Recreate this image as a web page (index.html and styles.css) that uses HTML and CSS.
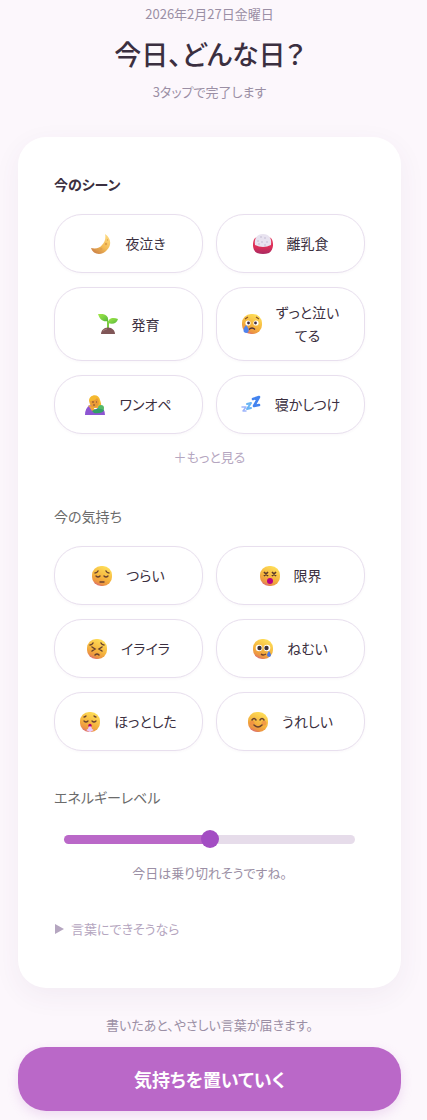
FILE: index.html
```
<!DOCTYPE html>
<html lang="ja">
<head>
    <meta charset="UTF-8">
    <meta name="viewport" content="width=device-width, initial-scale=1.0">
    <title>今日、どんな日？</title>
    <link rel="stylesheet" href="styles.css">
</head>
<body>

    <!-- 顔アイコン共通のグラデーション -->
    <svg class="defs" width="0" height="0" aria-hidden="true">
        <defs>
            <linearGradient id="face" x1="0.75" y1="0" x2="0.3" y2="1">
                <stop offset="0" stop-color="#ffe15a"/>
                <stop offset="0.6" stop-color="#f4b13d"/>
                <stop offset="0.85" stop-color="#ec9443"/>
                <stop offset="1" stop-color="#d96a78"/>
            </linearGradient>
            <linearGradient id="moon" x1="1" y1="0" x2="0.3" y2="1">
                <stop offset="0" stop-color="#ffe08a"/>
                <stop offset="0.6" stop-color="#f3bb55"/>
                <stop offset="1" stop-color="#cf8648"/>
            </linearGradient>
            <linearGradient id="bowl" x1="0" y1="0" x2="0" y2="1">
                <stop offset="0" stop-color="#e8355a"/>
                <stop offset="0.6" stop-color="#dc2f58"/>
                <stop offset="1" stop-color="#a92a62"/>
            </linearGradient>
            <linearGradient id="leaf" x1="0" y1="0" x2="1" y2="1">
                <stop offset="0" stop-color="#a5ea48"/>
                <stop offset="1" stop-color="#55b83c"/>
            </linearGradient>
        </defs>
    </svg>

    <main class="container">
        <header class="header">
            <p class="date">2026年2月27日金曜日</p>
            <h1>今日、どんな日？</h1>
            <p class="lead">3タップで完了します</p>
        </header>

        <form id="moodForm">
            <div class="card">
                <!-- シーン -->
                <section class="scene">
                    <h2 class="label label-strong">今のシーン</h2>
                    <div class="chips">
                        <button type="button" class="chip">
                            <svg class="icon" viewBox="0 0 20 20" aria-hidden="true">
                                <path d="M14 0c6 4 7 11 2 16-5 6-14 5-16-2 5 1 9 0 11-3 3-3 4-7 3-11z" fill="url(#moon)"/>
                                <g fill="#e0a04a"><circle cx="15" cy="10" r="1.2"/><circle cx="10" cy="15" r="1.3"/><circle cx="6" cy="16" r=".7"/><circle cx="16.500" cy="6" r=".7"/></g>
                            </svg>
                            <span>夜泣き</span>
                        </button>
                        <button type="button" class="chip">
                            <svg class="icon" viewBox="0 0 20 20" aria-hidden="true">
                                <path d="M2 4q8-4 16 0c3 4 3 12-2 15q-6 2-12 0C-1 16-1 8 2 4z" fill="url(#bowl)"/>
                                <path d="M2 11C1 4 4 0 10 0s9 4 8 11q-8 4-16 0z" fill="#e8e3f0"/>
                                <g fill="#b8afc9"><circle cx="8" cy="3" r=".7"/><circle cx="12" cy="4" r=".7"/><circle cx="5" cy="7" r=".7"/><circle cx="9" cy="8" r=".7"/><circle cx="14" cy="8" r=".7"/><circle cx="6" cy="10" r=".7"/><circle cx="12" cy="11" r=".7"/></g>
                            </svg>
                            <span>離乳食</span>
                        </button>
                        <button type="button" class="chip">
                            <svg class="icon" viewBox="0 0 20 20" aria-hidden="true">
                                <path d="M10 15V7" stroke="#7ccb42" stroke-width="2"/>
                                <path d="M0 0c7-1 11 2 10 7C5 8 2 6 0 0z" fill="url(#leaf)"/>
                                <path d="M10 9c0-5 5-6 10-4-1 4-5 6-10 4z" fill="url(#leaf)"/>
                                <path d="M3 20q0-4 4-6 3-1 6 0 4 2 4 6z" fill="#805657"/>
                                <path d="M5 17q2-2 4-2" stroke="#a47a76" fill="none"/>
                            </svg>
                            <span>発育</span>
                        </button>
                        <button type="button" class="chip">
                            <svg class="icon" viewBox="0 0 20 20" aria-hidden="true">
                                <rect width="20" height="20" rx="9" fill="url(#face)"/>
                                <path d="M3 5l3-2M17 5l-3-2" stroke="#875127" stroke-width="1.200"/>
                                <circle cx="6" cy="9" r="2.600" fill="#fff"/><circle cx="14" cy="9" r="2.600" fill="#fff"/>
                                <circle cx="6.500" cy="9" r="1.400" fill="#412c3e"/><circle cx="13.500" cy="9" r="1.400" fill="#412c3e"/>
                                <path d="M7 15.500q3-3 6 0" stroke="#4a2c39" stroke-width="1.300" fill="none"/>
                                <path d="M4 11q5 6 1 8-5 0-3-5z" fill="#4f83ee"/>
                            </svg>
                            <span>ずっと泣い<br>てる</span>
                        </button>
                        <button type="button" class="chip">
                            <svg class="icon" viewBox="0 0 20 20" aria-hidden="true">
                                <path d="M4 6c0-7 10-8 11-1 1 3 2 5 0 8H6z" fill="#f5b92f"/>
                                <path d="M5 6q5 0 7-3 3 3 1 8-4 3-7 0z" fill="#e99a37"/>
                                <path d="M7 7h2m2 0h1M8 10h2" stroke="#7c4930"/>
                                <path d="M0 20q0-7 5-10l5 5 5-4q5 3 5 9z" fill="#8d55d2"/>
                                <path d="M3 10l5 2 2 3-3 1z" fill="#f1a63c"/>
                                <circle cx="16" cy="13" r="3" fill="#55b968"/>
                                <path d="M7 16q5-4 12-1-2 4-10 3z" fill="#32a068"/>
                            </svg>
                            <span>ワンオペ</span>
                        </button>
                        <button type="button" class="chip">
                            <svg class="icon" viewBox="0 0 20 20" aria-hidden="true" fill="none" stroke-linejoin="round" stroke-linecap="round">
                                <path d="M12 4l6-2-5 9 5-1" stroke="#4383ef" stroke-width="2.600"/>
                                <path d="M6 9l4-1-4 6 4-1" stroke="#68b4f4" stroke-width="2"/>
                                <path d="M1 12l4 0-3 4 3 0" stroke="#9db5fb" stroke-width="1.500"/>
                            </svg>
                            <span>寝かしつけ</span>
                        </button>
                    </div>
                    <button type="button" class="more">＋もっと見る</button>
                </section>

                <!-- 気持ち -->
                <section class="feeling">
                    <h2 class="label">今の気持ち</h2>
                    <div class="chips">
                        <button type="button" class="chip">
                            <svg class="icon" viewBox="0 0 20 20" aria-hidden="true" fill="none" stroke="#69412f" stroke-width="1.400" stroke-linecap="round">
                                <rect width="20" height="20" rx="9" fill="url(#face)" stroke="none"/>
                                <path d="M3 7q2 0 3-2M17 7q-2 0-3-2M4 10q2 2 4 0M12 10q2 2 4 0M8 16h4"/>
                            </svg>
                            <span>つらい</span>
                        </button>
                        <button type="button" class="chip">
                            <svg class="icon" viewBox="0 0 20 20" aria-hidden="true">
                                <rect width="20" height="20" rx="9" fill="url(#face)"/>
                                <path d="M4 6l4 4M8 6l-4 4M12 6l4 4M16 6l-4 4" stroke="#5c3929" stroke-width="1.700"/>
                                <circle cx="10" cy="15" r="3" fill="#b80084"/>
                            </svg>
                            <span>限界</span>
                        </button>
                        <button type="button" class="chip">
                            <svg class="icon" viewBox="0 0 20 20" aria-hidden="true" fill="none" stroke="#65402f" stroke-width="1.500" stroke-linecap="round">
                                <rect width="20" height="20" rx="9" fill="url(#face)" stroke="none"/>
                                <path d="M3 6q2 0 3-2M17 6q-2 0-3-2M5 8l3 2-3 2M15 8l-3 2 3 2M8 16q2-2 4 0"/>
                            </svg>
                            <span>イライラ</span>
                        </button>
                        <button type="button" class="chip">
                            <svg class="icon" viewBox="0 0 20 20" aria-hidden="true">
                                <rect width="20" height="20" rx="9" fill="url(#face)"/>
                                <circle cx="6" cy="9" r="3.300" fill="#fff"/><circle cx="14" cy="9" r="3.300" fill="#fff"/>
                                <circle cx="6.500" cy="9" r="2.200" fill="#3e3036"/><circle cx="13.500" cy="9" r="2.200" fill="#3e3036"/>
                                <path d="M8 15q2 2 5 0" stroke="#70422c" stroke-width="1.300" fill="none"/>
                                <path d="M16 12q4 5 0 6-4-1 0-6z" fill="#4878e8"/>
                            </svg>
                            <span>ねむい</span>
                        </button>
                        <button type="button" class="chip">
                            <svg class="icon" viewBox="0 0 20 20" aria-hidden="true" fill="none" stroke="#69412f" stroke-width="1.300" stroke-linecap="round">
                                <rect width="20" height="20" rx="9" fill="url(#face)" stroke="none"/>
                                <path d="M4 5q1 0 2-1M16 5q-1 0-2-1M4 9q2 2 4 0M12 9q2 2 4 0"/>
                                <circle cx="10" cy="13.500" r="1.700" fill="#b3006f" stroke="none"/>
                                <path d="M10 14q2 1 2 3 3 1 0 2-2 2-4 0-3-1 0-2 0-2 2-3z" fill="#eac8fa" stroke="none"/>
                            </svg>
                            <span>ほっとした</span>
                        </button>
                        <button type="button" class="chip">
                            <svg class="icon" viewBox="0 0 20 20" aria-hidden="true" fill="none" stroke="#69412f" stroke-width="1.500" stroke-linecap="round">
                                <rect width="20" height="20" rx="9" fill="url(#face)" stroke="none"/>
                                <g fill="#ef8546" stroke="none" opacity=".6"><circle cx="4" cy="11" r="2.500"/><circle cx="16" cy="11" r="2.500"/></g>
                                <path d="M4 8q2-3 4 0M12 8q2-3 4 0M6 13q4 4 8 0"/>
                            </svg>
                            <span>うれしい</span>
                        </button>
                    </div>
                </section>

                <!-- エネルギーレベル -->
                <section class="energy">
                    <label class="label" for="energy">エネルギーレベル</label>
                    <input type="range" id="energy" class="slider" min="0" max="100" value="50">
                    <p class="hint">今日は乗り切れそうですね。</p>
                </section>

                <details class="words">
                    <summary><svg class="marker" viewBox="0 0 10 10" aria-hidden="true"><path d="M1 0l9 5-9 5z" fill="currentColor"/></svg>言葉にできそうなら</summary>
                    <textarea aria-label="言葉にできそうなら" rows="3"></textarea>
                </details>
            </div>

            <p class="note">書いたあと、やさしい言葉が届きます。</p>
            <button type="submit" class="submit">気持ちを置いていく</button>
        </form>
    </main>

    <script>
        // スライダーの塗り幅を値に合わせる
        const energy = document.getElementById('energy');
        energy.addEventListener('input', () => {
            energy.style.setProperty('--value', energy.value + '%');
        });

        document.getElementById('moodForm').addEventListener('submit', (event) => {
            event.preventDefault();
        });
    </script>

</body>
</html>
```
FILE: styles.css
```
/* 全体 */
* {
    box-sizing: border-box;
}

body {
    margin: 0;
    background-color: #fcf7fc;
    color: #3b2f40;
    font-family: "Noto Sans CJK JP", sans-serif;
    font-feature-settings: "palt";
    font-size: 13px;
    line-height: 22px;
}

h1, h2, p {
    margin: 0;
}

button {
    font: inherit;
    font-feature-settings: inherit;
    cursor: pointer;
}

.defs {
    position: absolute;
}

.container {
    max-width: 520px;
    margin: 0 auto;
    padding: 3px 26px 9px 18px;
}

/* ヘッダー */
.header {
    text-align: center;
    margin-bottom: 34px;
    color: #9b8fa5;
}

.header h1 {
    margin: 9px 0 7px;
    color: #3b2f40;
    font-size: 27px;
    line-height: 40px;
    font-weight: 500;
}

/* カード */
.card {
    padding: 36px 36px 48px;
    background-color: #fff;
    border-radius: 28px;
    box-shadow: 0 8px 28px rgba(90, 50, 100, 0.06);
}

.label {
    display: block;
    margin-bottom: 19px;
    color: #6b6b6b;
    font-size: 14px;
    font-weight: 400;
}

.label-strong {
    color: #3b2f40;
    font-weight: 700;
}

.chips {
    display: grid;
    grid-template-columns: 1fr 1fr;
    gap: 14px 13px;
}

.chip {
    display: flex;
    align-items: center;
    justify-content: center;
    gap: 14px;
    min-height: 59px;
    padding: 13px 8px;
    background-color: #fff;
    border: 1px solid #e8dfee;
    border-radius: 28px;
    box-shadow: 0 1px 3px rgba(90, 50, 100, 0.04);
    color: #3b2f40;
    font-size: 14px;
    line-height: 23px;
}

.icon {
    flex: none;
    width: 20px;
    height: 20px;
}

.more {
    display: block;
    margin: 12px auto 0;
    padding: 0;
    background: none;
    border: none;
    color: #b5a6c0;
}

.feeling {
    margin-top: 37px;
}

/* スライダー */
.energy {
    margin-top: 35px;
}

.energy .label {
    margin-bottom: 22px;
}

.slider {
    --value: 50%;
    display: block;
    width: calc(100% - 20px);
    height: 18px;
    margin: 0 10px;
    background: none;
    -webkit-appearance: none;
    appearance: none;
}

.slider::-webkit-slider-runnable-track {
    height: 9px;
    border-radius: 5px;
    background: linear-gradient(to right, #ba68c8 var(--value), #e6dcea var(--value));
}

.slider::-webkit-slider-thumb {
    -webkit-appearance: none;
    width: 18px;
    height: 18px;
    margin-top: -5px;
    border-radius: 50%;
    background-color: #a34dc3;
}

.hint {
    margin-top: 14px;
    color: #9b8fa5;
    text-align: center;
}

/* ことば */
.words {
    margin-top: 34px;
    color: #b5a6c0;
}

.words summary {
    display: flex;
    align-items: center;
    gap: 7px;
    cursor: pointer;
}

.marker {
    width: 10px;
    height: 10px;
}

.words textarea {
    width: 100%;
    border: 1px solid #e8dfee;
    border-radius: 14px;
}

/* 送信 */
.note {
    margin: 26px 0 11px;
    color: #9b8fa5;
    text-align: center;
}

.submit {
    display: block;
    width: 100%;
    padding: 20px;
    background-color: #ba68c8;
    border: none;
    border-radius: 28px;
    box-shadow: 0 4px 12px rgba(186, 104, 200, 0.2);
    color: #fff;
    font-size: 18px;
    line-height: 24px;
    font-weight: 700;
}
```
